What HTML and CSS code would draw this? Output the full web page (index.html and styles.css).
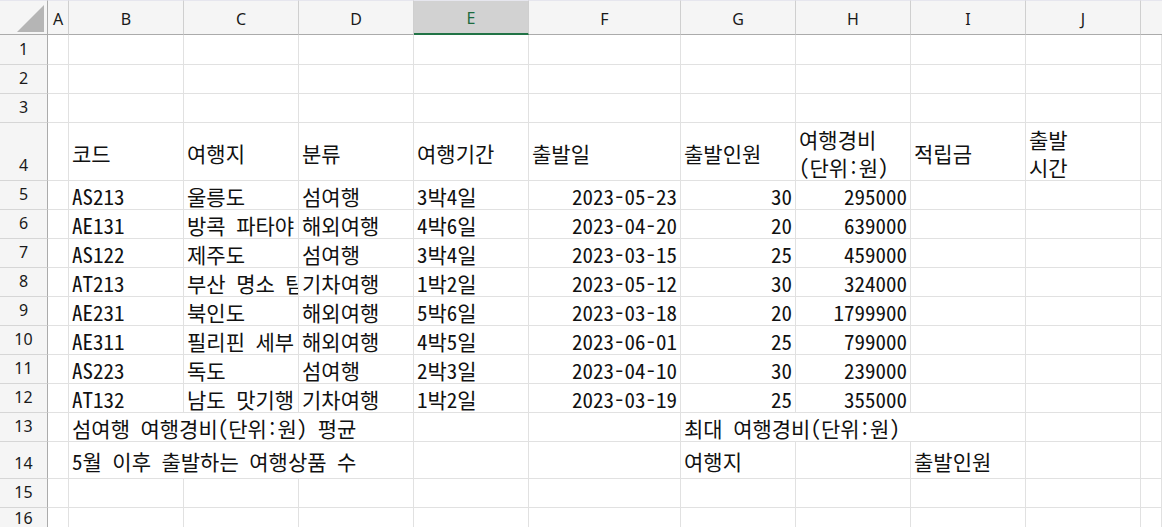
FILE: index.html
```html
<!DOCTYPE html>
<html lang="ko">
<head>
<meta charset="utf-8">
<title>Sheet</title>
<link rel="stylesheet" href="styles.css">
</head>
<body>
<div class="sheet">
  <!-- header row -->
  <div class="corner"><span class="tri"></span></div>
  <div class="ch">A</div><div class="ch">B</div><div class="ch">C</div><div class="ch">D</div>
  <div class="ch sel">E</div><div class="ch">F</div><div class="ch">G</div><div class="ch">H</div>
  <div class="ch">I</div><div class="ch">J</div><div class="ch last"></div>

  <!-- row 1 -->
  <div class="rh">1</div><div class="c"></div><div class="c"></div><div class="c"></div><div class="c"></div><div class="c"></div><div class="c"></div><div class="c"></div><div class="c"></div><div class="c"></div><div class="c"></div><div class="c"></div>
  <!-- row 2 -->
  <div class="rh">2</div><div class="c"></div><div class="c"></div><div class="c"></div><div class="c"></div><div class="c"></div><div class="c"></div><div class="c"></div><div class="c"></div><div class="c"></div><div class="c"></div><div class="c"></div>
  <!-- row 3 -->
  <div class="rh">3</div><div class="c"></div><div class="c"></div><div class="c"></div><div class="c"></div><div class="c"></div><div class="c"></div><div class="c"></div><div class="c"></div><div class="c"></div><div class="c"></div><div class="c"></div>
  <!-- row 4 -->
  <div class="rh">4</div><div class="c"></div>
  <div class="c">코드</div><div class="c">여행지</div><div class="c">분류</div><div class="c">여행기간</div>
  <div class="c">출발일</div><div class="c">출발인원</div>
  <div class="c"><span class="ml">여행경비<br>(단위:원)</span></div>
  <div class="c">적립금</div>
  <div class="c"><span class="ml">출발<br>시간</span></div>
  <div class="c"></div>
  <!-- row 5 -->
  <div class="rh">5</div><div class="c"></div>
  <div class="c">AS213</div><div class="c">울릉도</div><div class="c">섬여행</div><div class="c">3박4일</div>
  <div class="c r">2023-05-23</div><div class="c r">30</div><div class="c r">295000</div>
  <div class="c"></div><div class="c"></div><div class="c"></div>
  <!-- row 6 -->
  <div class="rh">6</div><div class="c"></div>
  <div class="c">AE131</div><div class="c">방콕 파타야</div><div class="c">해외여행</div><div class="c">4박6일</div>
  <div class="c r">2023-04-20</div><div class="c r">20</div><div class="c r">639000</div>
  <div class="c"></div><div class="c"></div><div class="c"></div>
  <!-- row 7 -->
  <div class="rh">7</div><div class="c"></div>
  <div class="c">AS122</div><div class="c">제주도</div><div class="c">섬여행</div><div class="c">3박4일</div>
  <div class="c r">2023-03-15</div><div class="c r">25</div><div class="c r">459000</div>
  <div class="c"></div><div class="c"></div><div class="c"></div>
  <!-- row 8 -->
  <div class="rh">8</div><div class="c"></div>
  <div class="c">AT213</div><div class="c">부산 명소 탐방</div><div class="c">기차여행</div><div class="c">1박2일</div>
  <div class="c r">2023-05-12</div><div class="c r">30</div><div class="c r">324000</div>
  <div class="c"></div><div class="c"></div><div class="c"></div>
  <!-- row 9 -->
  <div class="rh">9</div><div class="c"></div>
  <div class="c">AE231</div><div class="c">북인도</div><div class="c">해외여행</div><div class="c">5박6일</div>
  <div class="c r">2023-03-18</div><div class="c r">20</div><div class="c r">1799900</div>
  <div class="c"></div><div class="c"></div><div class="c"></div>
  <!-- row 10 -->
  <div class="rh">10</div><div class="c"></div>
  <div class="c">AE311</div><div class="c">필리핀 세부</div><div class="c">해외여행</div><div class="c">4박5일</div>
  <div class="c r">2023-06-01</div><div class="c r">25</div><div class="c r">799000</div>
  <div class="c"></div><div class="c"></div><div class="c"></div>
  <!-- row 11 -->
  <div class="rh">11</div><div class="c"></div>
  <div class="c">AS223</div><div class="c">독도</div><div class="c">섬여행</div><div class="c">2박3일</div>
  <div class="c r">2023-04-10</div><div class="c r">30</div><div class="c r">239000</div>
  <div class="c"></div><div class="c"></div><div class="c"></div>
  <!-- row 12 -->
  <div class="rh">12</div><div class="c"></div>
  <div class="c">AT132</div><div class="c">남도 맛기행</div><div class="c">기차여행</div><div class="c">1박2일</div>
  <div class="c r">2023-03-19</div><div class="c r">25</div><div class="c r">355000</div>
  <div class="c"></div><div class="c"></div><div class="c"></div>
  <!-- row 13 -->
  <div class="rh">13</div><div class="c"></div>
  <div class="c span3">섬여행 여행경비(단위:원) 평균</div>
  <div class="c"></div><div class="c"></div>
  <div class="c span3">최대 여행경비(단위:원)</div>
  <div class="c"></div><div class="c"></div>
  <!-- row 14 -->
  <div class="rh">14</div><div class="c"></div>
  <div class="c span3">5월 이후 출발하는 여행상품 수</div>
  <div class="c"></div><div class="c"></div>
  <div class="c">여행지</div><div class="c"></div><div class="c">출발인원</div>
  <div class="c"></div><div class="c"></div>
  <!-- row 15 -->
  <div class="rh">15</div><div class="c"></div><div class="c"></div><div class="c"></div><div class="c"></div><div class="c"></div><div class="c"></div><div class="c"></div><div class="c"></div><div class="c"></div><div class="c"></div><div class="c"></div>
  <!-- row 16 -->
  <div class="rh">16</div><div class="c"></div><div class="c"></div><div class="c"></div><div class="c"></div><div class="c"></div><div class="c"></div><div class="c"></div><div class="c"></div><div class="c"></div><div class="c"></div><div class="c"></div>
</div>
</body>
</html>
```
FILE: styles.css
```css
* { box-sizing: border-box; }
html, body { margin: 0; padding: 0; background: #fff; }
body { width: 1162px; height: 527px; overflow: hidden; }

.sheet {
  display: grid;
  grid-template-columns: 48px 21px 115px 115px 115px 115px 152px 115px 115px 115px 115px 1fr;
  grid-template-rows: 35px 30px 29px 29px 58px 29px 29px 29px 29px 29px 29px 29px 29px 29px 37px 29px 1fr;
  height: 527px;
}

.corner, .ch, .rh {
  background: #f5f5f5;
  font-family: "Noto Sans", "Open Sans", sans-serif;
  font-size: 16px;
  color: #1a1a1a;
}

.corner {
  position: relative;
  border-top: 1px solid #e6e6ee;
  border-right: 1px solid #ababab;
  border-bottom: 1px solid #ababab;
}
.corner .tri {
  position: absolute;
  right: 3px;
  bottom: 2px;
  width: 0;
  height: 0;
  border-left: 27px solid transparent;
  border-bottom: 27px solid #b5b5b5;
}

.ch {
  display: flex;
  align-items: center;
  justify-content: center;
  padding-top: 2px;
  border-top: 1px solid #e6e6ee;
  border-right: 1px solid #cfcfcf;
  border-bottom: 1px solid #ababab;
}
.ch.sel {
  background: #d2d2d2;
  color: #1d6b40;
  border-bottom: 2px solid #217346;
}
.ch.last { border-right: none; }

.rh {
  display: flex;
  align-items: flex-end;
  justify-content: center;
  padding-bottom: 5px;
  line-height: 20px;
  border-right: 1px solid #ababab;
  border-bottom: 1px solid #d6d6d6;
}

.c {
  display: flex;
  align-items: center;
  padding: 2px 3px 0 3px;
  border-right: 1px solid #e1e1e1;
  border-bottom: 1px solid #e1e1e1;
  overflow: hidden;
  white-space: nowrap;
  font-family: "Noto Sans Mono CJK KR", "Noto Sans CJK KR", sans-serif;
  font-size: 21px;
  line-height: 24px;
  color: #111;
}
.c.r { justify-content: flex-end; }
.c.span3 { grid-column: span 3; overflow: visible; }
.ml { display: block; line-height: 28px; }
```
